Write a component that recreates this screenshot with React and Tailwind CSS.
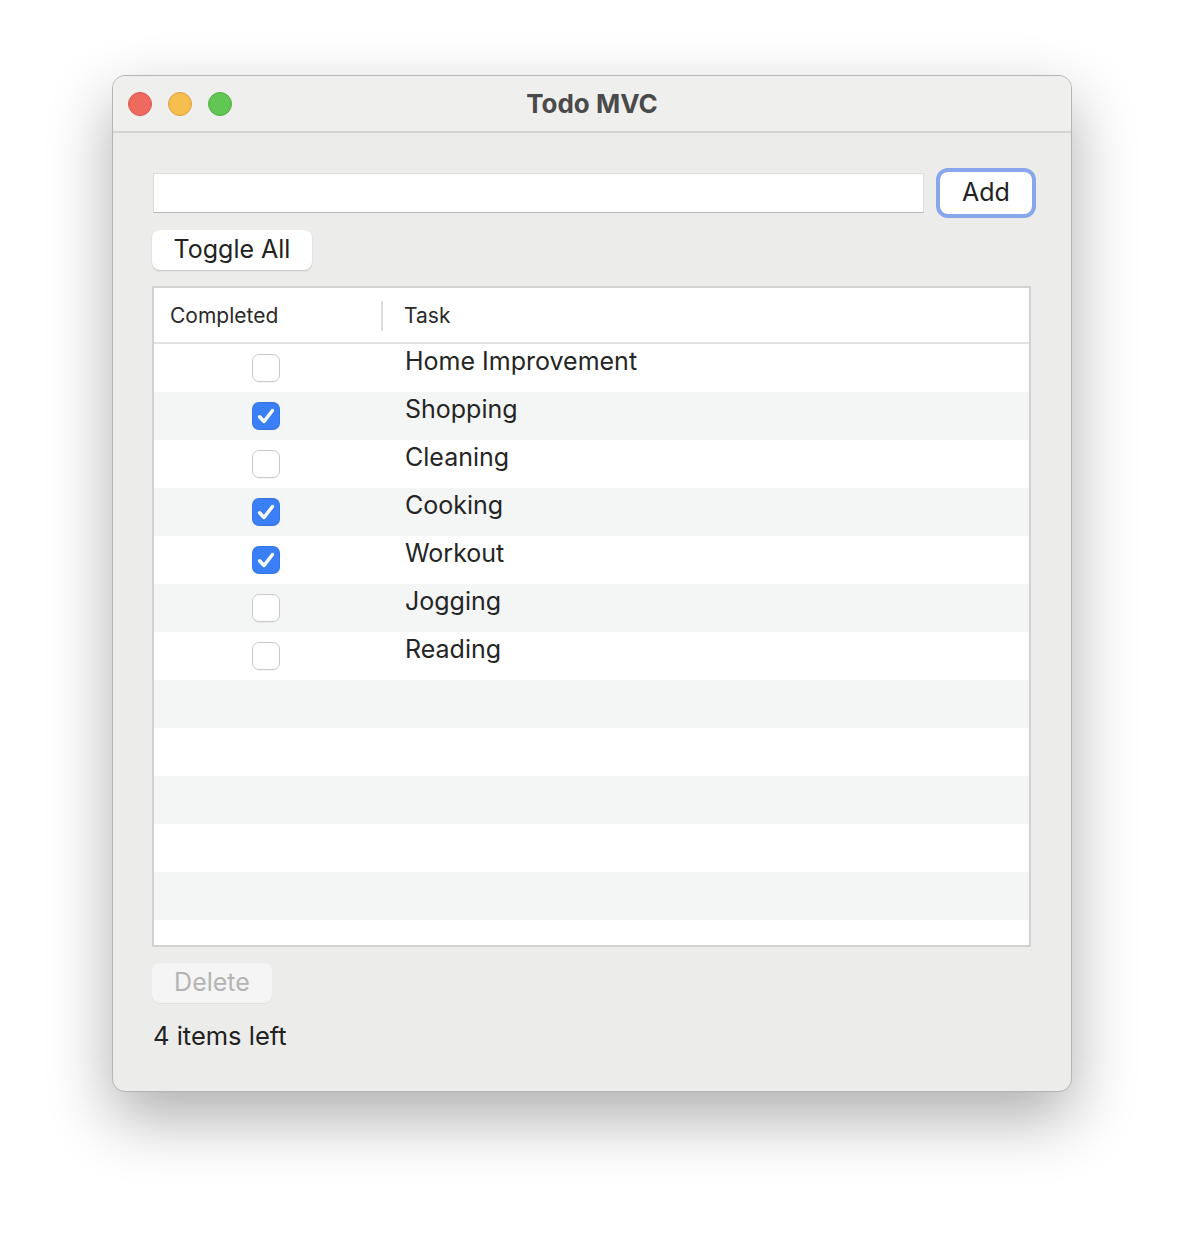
import React from "react";

const tasks = [
  { name: "Home Improvement", done: false },
  { name: "Shopping", done: true },
  { name: "Cleaning", done: false },
  { name: "Cooking", done: true },
  { name: "Workout", done: true },
  { name: "Jogging", done: false },
  { name: "Reading", done: false },
];

function Check({ checked }) {
  if (checked) {
    return (
      <div className="w-[28px] h-[28px] rounded-[7px] bg-[#3a7ff6] flex items-center justify-center shadow-[inset_0_0_0_1px_rgba(0,0,0,0.06)]">
        <svg width="24" height="24" viewBox="0 0 24 24" fill="none">
          <path d="M5.5 12.8 L10 17.5 L18.5 6.5" stroke="white" strokeWidth="3.4" strokeLinecap="round" strokeLinejoin="round" />
        </svg>
      </div>
    );
  }
  return <div className="w-[28px] h-[28px] rounded-[7px] bg-white border border-[#c9c9c9] shadow-[0_1px_1px_rgba(0,0,0,0.04)]" />;
}

export default function App() {
  const rows = [];
  for (let i = 0; i < 13; i++) {
    const t = tasks[i];
    rows.push(
      <div key={i} className={`flex h-[48px] shrink-0 ${i % 2 === 1 ? "bg-[#f4f5f5]" : "bg-white"}`}>
        <div className="w-[224px] shrink-0 flex items-center justify-center">{t && <Check checked={t.done} />}</div>
        <div className="pl-[27px] pt-[1px] text-[25px] leading-[32px] text-[#252525]">{t ? t.name : ""}</div>
      </div>
    );
  }
  return (
    <div className="min-h-[1240px] bg-white pt-[75px] pl-[112px]" style={{ fontFamily: "Inter, 'Noto Sans', sans-serif" }}>
      <div className="w-[960px] h-[1017px] rounded-[13px] bg-[#ececeb] border border-[#b5b5b5] shadow-[0_26px_64px_rgba(0,0,0,0.32)] overflow-hidden flex flex-col">
        <div className="h-[57px] shrink-0 bg-[#efefee] border-b-[2px] border-[#d4d4d4] flex items-center relative">
          <div className="flex gap-[16px] pl-[15px]">
            <div className="w-[24px] h-[24px] rounded-full bg-[#ee6a5f] border border-[#d8584e]" />
            <div className="w-[24px] h-[24px] rounded-full bg-[#f5be4f] border border-[#dba23a]" />
            <div className="w-[24px] h-[24px] rounded-full bg-[#62c655] border border-[#52ad45]" />
          </div>
          <div className="absolute left-0 right-0 top-0 h-[55px] flex items-center justify-center text-[26px] font-bold text-[#4a4a4a] pointer-events-none">
            Todo MVC
          </div>
        </div>
        <div className="flex flex-col pl-[39px] pr-[35px] pt-[35px]">
          <div className="flex items-center">
            <div className="shrink-0 w-[771px] h-[40px] bg-white border border-[#dcdcdc] border-b-[#b9b9b9] ml-[1px]" />
            <div className="shrink-0 ml-[12px] w-[100px] h-[50px] rounded-[12px] bg-[#88a6ec] p-[4px]">
              <div className="w-full h-full rounded-[8px] bg-white flex items-center justify-center text-[25px] text-[#222]">Add</div>
            </div>
          </div>
          <div className="mt-[12px] w-[160px] h-[40px] rounded-[8px] bg-white shadow-[0_1px_1.5px_rgba(0,0,0,0.18)] flex items-center justify-center text-[25px] text-[#222]">
            Toggle All
          </div>
          <div className="mt-[16px] w-[879px] h-[661px] border-[2px] border-[#d2d2d2] bg-white flex flex-col overflow-hidden">
            <div className="h-[56px] shrink-0 flex items-center border-b-[2px] border-[#e2e2e2]">
              <div className="w-[229px] h-[30px] mt-[2px] border-r-[2px] border-[#dedede] flex items-center pl-[16px] text-[21px] text-[#2a2a2a]">Completed</div>
              <div className="pl-[21px] mt-[2px] text-[21px] text-[#2a2a2a]">Task</div>
            </div>
            {rows}
          </div>
          <div className="mt-[16px] w-[120px] h-[40px] rounded-[8px] bg-[#f5f5f5] shadow-[0_1px_1px_rgba(0,0,0,0.06)] flex items-center justify-center text-[25px] text-[#b4b4b4]">
            Delete
          </div>
          <div className="mt-[17px] pl-[1px] text-[25.5px] leading-[32px] text-[#222]">4 items left</div>
        </div>
      </div>
    </div>
  );
}
